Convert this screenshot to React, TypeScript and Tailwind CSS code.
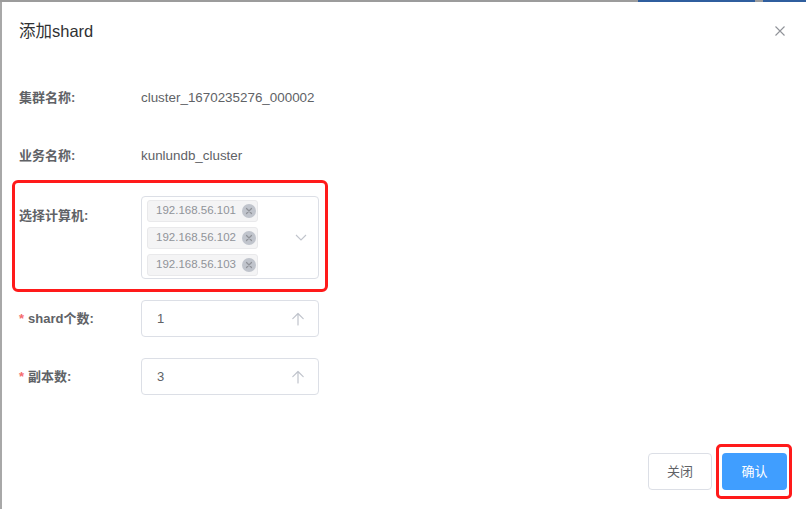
import React from "react";

const font = { fontFamily: '"Liberation Sans", "Noto Sans CJK SC", Arial, sans-serif' };

function Tag({ text }: { text: string }) {
  return (
    <div className="flex h-[22px] w-[111px] items-center rounded-[3px] border border-[#e9e9eb] bg-[#f4f4f5] pl-[8px] pr-[1px] text-[11.5px] text-[#909399]">
      <span className="leading-none">{text}</span>
      <span className="ml-auto flex h-[14px] w-[14px] items-center justify-center rounded-full bg-[#c0c4cc]">
        <svg width="8" height="8" viewBox="0 0 8 8">
          <path d="M1.5 1.5 L6.5 6.5 M6.5 1.5 L1.5 6.5" stroke="#909399" strokeWidth="1.2" strokeLinecap="round" />
        </svg>
      </span>
    </div>
  );
}

function NumberInput({ value }: { value: string }) {
  return (
    <div className="flex h-[37px] w-[178px] items-center rounded-[4px] border border-[#dcdfe6] pl-[15px] pr-[13px] text-[13px] text-[#606266]">
      <span>{value}</span>
      <svg className="ml-auto" width="14" height="14" viewBox="0 0 14 14" fill="none">
        <path d="M7 1.5 V13 M1.8 6.7 L7 1.5 L12.2 6.7" stroke="#c0c4cc" strokeWidth="1.2" strokeLinecap="round" strokeLinejoin="round" />
      </svg>
    </div>
  );
}

export default function App() {
  return (
    <div className="relative h-[509px] w-[806px] overflow-hidden bg-white" style={font}>
      {/* backdrop strip at top */}
      <div className="flex h-[2px] w-full bg-[#9c9c9c]">
        <div className="w-[638px]" />
        <div className="w-[117px] bg-[#2f5e9e]" />
        <div className="w-[8px]" />
        <div className="flex-1 bg-[#2f5e9e]" />
      </div>
      <div className="flex h-[507px]">
        <div className="w-[2px] bg-[#a8a8a8]" />
        <div className="flex flex-1 flex-col">
          {/* header */}
          <div className="flex h-[58px] items-center justify-between pl-[17px] pr-[21px]">
            <span className="text-[16.5px] text-[#303133]">添加shard</span>
            <svg width="10" height="10" viewBox="0 0 10 10">
              <path d="M0.5 0.5 L9.5 9.5 M9.5 0.5 L0.5 9.5" stroke="#909399" strokeWidth="1.1" />
            </svg>
          </div>
          {/* body */}
          <div className="flex flex-1 flex-col gap-[22px] pl-[17px] pt-[20px]">
            <div className="flex h-[36px] items-center">
              <span className="w-[122px] text-[13px] font-bold text-[#606266]">集群名称:</span>
              <span className="text-[13.4px] text-[#606266]">cluster_1670235276_000002</span>
            </div>
            <div className="flex h-[36px] items-center">
              <span className="w-[122px] text-[13px] font-bold text-[#606266]">业务名称:</span>
              <span className="text-[13.4px] text-[#606266]">kunlundb_cluster</span>
            </div>
            <div className="flex items-start">
              <span className="w-[122px] text-[13px] font-bold leading-[40px] text-[#606266]">选择计算机:</span>
              <div className="flex h-[83px] w-[178px] items-center rounded-[4px] border border-[#dcdfe6] pl-[5px] pr-[11px]">
                <div className="flex flex-col gap-[5px] pt-[1px]">
                  <Tag text="192.168.56.101" />
                  <Tag text="192.168.56.102" />
                  <Tag text="192.168.56.103" />
                </div>
                <svg className="ml-auto" width="12" height="7" viewBox="0 0 12 7" fill="none">
                  <path d="M1 1 L6 6 L11 1" stroke="#c0c4cc" strokeWidth="1.1" />
                </svg>
              </div>
            </div>
            <div className="-mt-[1px] flex items-center">
              <span className="w-[122px] text-[13px] font-bold text-[#606266]">
                <span className="mr-[4px] text-[#f56c6c]">*</span>shard个数:
              </span>
              <NumberInput value="1" />
            </div>
            <div className="-mt-[1px] flex items-center">
              <span className="w-[122px] text-[13px] font-bold text-[#606266]">
                <span className="mr-[4px] text-[#f56c6c]">*</span>副本数:
              </span>
              <NumberInput value="3" />
            </div>
          </div>
          {/* footer */}
          <div className="flex justify-end gap-[10px] pb-[19px] pr-[19px]">
            <button className="h-[37px] w-[64px] rounded-[4px] border border-[#dcdfe6] bg-white text-[13px] text-[#606266]">关闭</button>
            <button className="h-[37px] w-[65px] rounded-[4px] bg-[#409eff] text-[13px] text-white">确认</button>
          </div>
        </div>
      </div>
      {/* annotation boxes */}
      <div className="pointer-events-none absolute left-[12px] top-[180px] h-[112px] w-[316px] rounded-[6px] border-[3px] border-[#ff1a1a]" />
      <div className="pointer-events-none absolute left-[716px] top-[444px] h-[55px] w-[76px] rounded-[5px] border-[3px] border-[#ff1a1a]" />
    </div>
  );
}
